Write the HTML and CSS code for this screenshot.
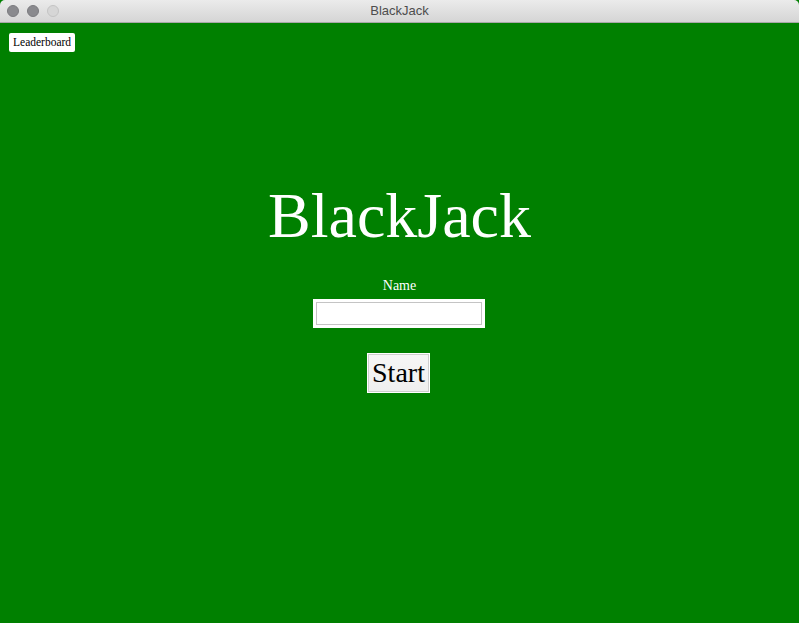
FILE: index.html
```html
<!DOCTYPE html>
<html>
<head>
<meta charset="utf-8">
<title>BlackJack</title>
<link rel="stylesheet" href="styles.css">
</head>
<body>
<div class="window">
  <div class="titlebar">
    <div class="lights">
      <span class="light"></span>
      <span class="light"></span>
      <span class="light off"></span>
    </div>
    <div class="title">BlackJack</div>
  </div>
  <div class="content">
    <div class="topbar">
      <button class="leader">Leaderboard</button>
    </div>
    <div class="stack">
      <h1 class="heading">BlackJack</h1>
      <label class="name-label" for="name">Name</label>
      <input class="name-input" id="name" type="text">
      <button class="start">Start</button>
    </div>
  </div>
</div>
</body>
</html>
```

FILE: styles.css
```css
html, body {
  margin: 0;
  padding: 0;
  width: 799px;
  height: 623px;
  overflow: hidden;
  background: #008000;
}
.window {
  display: flex;
  flex-direction: column;
  height: 623px;
}
.titlebar {
  height: 22px;
  flex: 0 0 22px;
  background: linear-gradient(#ebebeb, #d5d5d5);
  border-bottom: 1px solid #a8a8a8;
  display: flex;
  align-items: center;
  position: relative;
  border-radius: 5px 5px 0 0;
}
.lights {
  display: flex;
  gap: 8px;
  padding-left: 7px;
}
.light {
  width: 12px;
  height: 12px;
  border-radius: 50%;
  background: #8a8a8e;
  box-sizing: border-box;
  border: 1px solid #7b7b7f;
}
.light.off {
  background: #d6d6d6;
  border-color: #c4c4c4;
}
.title {
  position: absolute;
  left: 0;
  right: 0;
  text-align: center;
  font-family: "Liberation Sans", Arial, sans-serif;
  font-size: 13px;
  color: #4d4d4d;
  line-height: 22px;
}
.content {
  flex: 1;
  background: #008000;
  display: flex;
  flex-direction: column;
  font-family: "Liberation Serif", "Times New Roman", serif;
}
.topbar {
  padding: 10px 0 0 9px;
  display: flex;
}
.leader {
  font-family: "Liberation Serif", serif;
  font-size: 11.5px;
  background: #fff;
  color: #000;
  border: none;
  border-radius: 2px;
  padding: 0 4px;
  height: 19px;
  line-height: 19px;
  margin: 0;
}
.stack {
  display: flex;
  flex-direction: column;
  align-items: center;
}
.heading {
  margin: 132px 0 0 0;
  font-size: 64px;
  font-weight: normal;
  line-height: 64px;
  color: #fff;
}
.name-label {
  color: #fff;
  font-size: 14px;
  line-height: 16px;
  margin-top: 30px;
}
.name-input {
  margin: 8px 0 0 -1px;
  width: 166px;
  height: 23px;
  box-sizing: border-box;
  border: 1px solid #c4c4c4;
  box-shadow: 0 0 0 3px #fff;
  background: #fff;
  padding: 0 4px;
  outline: none;
}
.start {
  margin: 29px 0 0 -2px;
  font-family: "Liberation Serif", serif;
  font-size: 28px;
  height: 38px;
  width: 61px;
  padding: 0;
  color: #000;
  background: linear-gradient(#f6f6f6, #efefef);
  border: 1px solid #cfcfcf;
  box-shadow: 0 0 0 1px #fff;
}
```
